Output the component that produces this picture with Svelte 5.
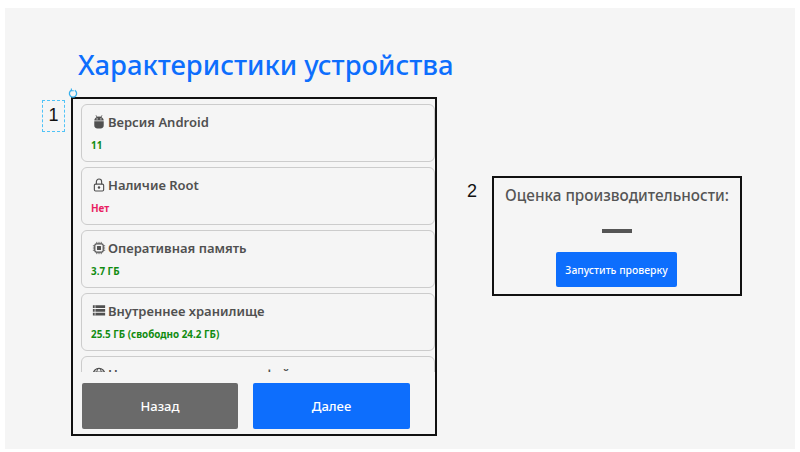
<script>
	const specs = [
		{ icon: 'android', name: 'Версия Android', value: '11', ok: true },
		{ icon: 'lock', name: 'Наличие Root', value: 'Нет', ok: false },
		{ icon: 'chip', name: 'Оперативная память', value: '3.7 ГБ', ok: true },
		{ icon: 'list', name: 'Внутреннее хранилище', value: '25.5 ГБ (свободно 24.2 ГБ)', ok: true },
		{ icon: 'globe', name: 'Наличие сетевых интерфейсов', value: 'Да', ok: true }
	];
</script>

<div class="page">
	<h1>Характеристики устройства</h1>
	<div class="columns">
		<section class="frame device">
			<span class="marker selected">1</span>
			<svg class="handle" viewBox="0 0 10 10" width="10" height="10">
				<path d="M6.8 2.4a3.6 3.6 0 1 1-3.6 0" fill="none" stroke="#35b0ee" stroke-width="1.3" />
				<path d="M3.4 0.4v2.4h2.4" fill="none" stroke="#35b0ee" stroke-width="1.1" />
			</svg>
			<div class="list">
				{#each specs as spec}
					<div class="card">
						<div class="name">
							<svg class="icon" viewBox="0 0 16 16" width="14" height="14">
								{#if spec.icon === 'android'}
									<path d="M2.600 6.200a5.400 4.400 0 0 1 10.800 0zM2.600 7h10.800v4.800a3.600 3.600 0 0 1-3.600 3.600H6.200a3.600 3.600 0 0 1-3.600-3.600z" fill="currentColor" />
									<path d="M4.600 .4l1.400 2.400M11.400 .4L10 2.800" stroke="currentColor" stroke-width="1" />
									<circle cx="5.800" cy="4.500" r=".7" fill="#f5f5f5" />
									<circle cx="10.200" cy="4.500" r=".7" fill="#f5f5f5" />
								{:else if spec.icon === 'lock'}
									<path d="M5 7V4.200a3 3 0 0 1 6 0V7" fill="none" stroke="currentColor" stroke-width="1.300" />
									<rect x="2.700" y="7" width="10.600" height="7.800" rx="1.400" fill="none" stroke="currentColor" stroke-width="1.300" />
									<circle cx="8" cy="10.800" r="1.400" fill="currentColor" />
								{:else if spec.icon === 'chip'}
									<rect x="3.200" y="3.200" width="9.600" height="9.600" rx="2" fill="none" stroke="currentColor" stroke-width="1.400" />
									<rect x="5.700" y="5.700" width="4.600" height="4.600" rx=".6" fill="currentColor" />
									<path d="M5.500 1v2M8 1v2M10.500 1v2M5.500 13v2M8 13v2M10.500 13v2M1 5.500h2M1 8h2M1 10.500h2M13 5.500h2M13 8h2M13 10.500h2" stroke="currentColor" stroke-width="1" />
								{:else if spec.icon === 'list'}
									<path d="M1 1.500h14v3H1zM1 5.800h14v3H1zM1 10.100h14v3H1z" fill="currentColor" />
									<path d="M3.500 1.500v11.600" stroke="#f5f5f5" stroke-width=".8" />
								{:else}
									<circle cx="8" cy="8" r="6.500" fill="none" stroke="currentColor" stroke-width="1.400" />
									<ellipse cx="8" cy="8" rx="2.800" ry="6.500" fill="none" stroke="currentColor" stroke-width="1.100" />
									<path d="M1.500 5.800h13M1.500 10.200h13" stroke="currentColor" stroke-width="1.100" />
								{/if}
							</svg>
							{spec.name}
						</div>
						<div class="value" class:bad={!spec.ok}>{spec.value}</div>
					</div>
				{/each}
			</div>
			<div class="actions">
				<button class="nav back">Назад</button>
				<button class="nav next">Далее</button>
			</div>
		</section>

		<section class="frame score">
			<span class="marker">2</span>
			<h2>Оценка производительности:</h2>
			<div class="dash"></div>
			<button class="run">Запустить проверку</button>
		</section>
	</div>
</div>

<style>
	:global(body) {
		background: #fff;
		font-family: "Noto Sans", "Open Sans", sans-serif;
	}

	.page {
		box-sizing: border-box;
		height: 441px;
		margin: 8px 5px 0;
		padding: 36px 0 0 66px;
		background: #f5f5f5;
		overflow: hidden;
	}

	h1 {
		margin: 0 0 12px 7px;
		font-size: 27.4px;
		line-height: 41px;
		font-weight: 500;
		color: #0d6efd;
	}

	.columns {
		display: flex;
		align-items: flex-start;
		gap: 55px;
	}

	.frame {
		position: relative;
		box-sizing: border-box;
		border: 2px solid #111;
	}

	.device {
		display: flex;
		flex-direction: column;
		width: 366px;
		height: 339px;
	}

	.marker {
		position: absolute;
		left: -27px;
		top: 3px;
		font: 18px "Liberation Sans", sans-serif;
		color: #111;
	}

	.marker.selected {
		left: -31px;
		top: 1px;
		width: 23px;
		height: 32px;
		box-sizing: border-box;
		border: 1px dashed #4fc3f7;
		text-align: center;
		line-height: 29px;
	}

	.handle {
		position: absolute;
		left: -5px;
		top: -11px;
	}

	.list {
		height: 273px;
		overflow: hidden;
		padding: 5px 0 0 8px;
		box-sizing: border-box;
		flex: none;
	}

	.card {
		box-sizing: border-box;
		width: 354px;
		height: 58px;
		margin-bottom: 5px;
		padding: 8px 9px;
		border: 1.5px solid #ccc;
		border-radius: 6px;
	}

	.name {
		display: flex;
		align-items: center;
		gap: 2px;
		padding-left: 1px;
		font-size: 13px;
		line-height: 18px;
		font-weight: 600;
		color: #505050;
	}

	.icon {
		flex: none;
	}

	.value {
		margin-top: 7px;
		font-size: 9.85px;
		line-height: 14px;
		font-weight: 700;
		color: #118c11;
	}

	.value.bad {
		color: #e91e63;
	}

	.actions {
		display: flex;
		gap: 15px;
		padding: 11px 0 0 9px;
	}

	.nav {
		height: 46px;
		border: none;
		border-radius: 2px;
		font: 500 13px "Noto Sans", sans-serif;
		color: #fff;
	}

	.back {
		width: 156px;
		background: #6a6a6a;
	}

	.next {
		width: 157px;
		background: #0d6efd;
	}

	.score {
		width: 250px;
		height: 120px;
		margin-top: 79px;
		text-align: center;
	}

	h2 {
		margin: 6px 0 0;
		font-size: 15.3px;
		line-height: 22px;
		font-weight: 500;
		color: #555;
		white-space: nowrap;
	}

	.dash {
		width: 30px;
		height: 4px;
		margin: 23px auto 19px;
		background: #555;
	}

	.run {
		display: block;
		width: 121px;
		height: 35px;
		margin-left: 62px;
		border: none;
		border-radius: 2px;
		background: #0d6efd;
		color: #fff;
		font: 500 10.4px "Noto Sans", sans-serif;
	}
</style>
